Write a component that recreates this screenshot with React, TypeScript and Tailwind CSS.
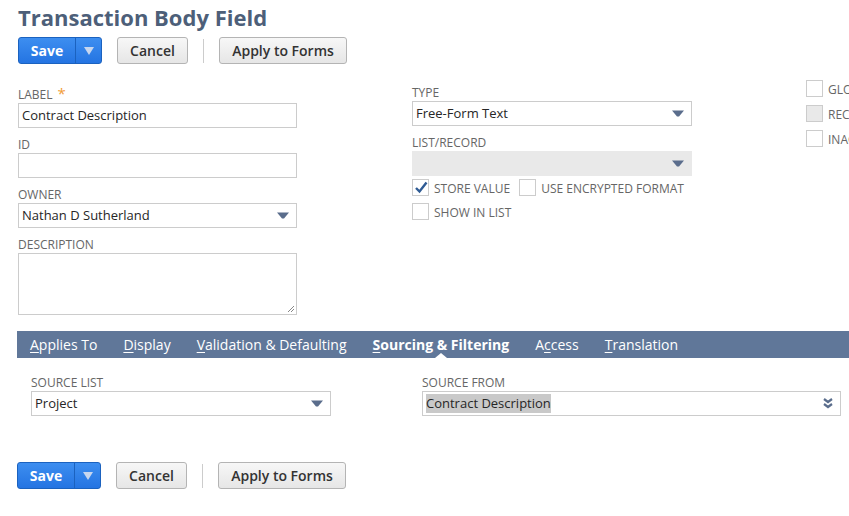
import React from "react";

const font = "font-['Open_Sans',sans-serif]";

function SelectArrow() {
  return (
    <svg width="12" height="7" viewBox="0 0 12 7" className="shrink-0">
      <path d="M0 0.5 L12 0.5 L7 6.5 L5 6.5 Z" fill="#5a6d8c" />
    </svg>
  );
}

function DoubleChevron() {
  return (
    <svg width="10" height="11" viewBox="0 0 10 11" className="shrink-0">
      <path d="M1 1 L5 4 L9 1" stroke="#5a6d8c" strokeWidth="2.2" fill="none" />
      <path d="M1 6 L5 9 L9 6" stroke="#5a6d8c" strokeWidth="2.2" fill="none" />
    </svg>
  );
}

function Check() {
  return (
    <svg width="14" height="13" viewBox="0 0 14 13">
      <path d="M2 7 L5.5 10.5 L12.5 1.5" stroke="#2f5b94" strokeWidth="2.4" fill="none" />
    </svg>
  );
}

function Label({ children, req }: { children: React.ReactNode; req?: boolean }) {
  return (
    <div className="text-[12px] leading-[16px] mt-[2px] text-[#666] uppercase whitespace-nowrap">
      {children}
      {req && <span className="text-[#f29d38] ml-[5px] text-[15px] leading-[10px]">*</span>}
    </div>
  );
}

function TextInput({ value, w }: { value?: string; w: string }) {
  return (
    <div className={`${w} h-[25px] border border-[#ccc] bg-white flex items-center px-[3px] text-[13px] text-[#262626]`}>
      {value}
    </div>
  );
}

function Select({ value, w, disabled, highlight, double }: { value?: string; w: string; disabled?: boolean; highlight?: boolean; double?: boolean }) {
  return (
    <div
      className={`${w} h-[25px] border flex items-center justify-between pl-[3px] pr-[7px] text-[13px] text-[#262626] ${
        disabled ? "bg-[#e9e9e9] border-[#e9e9e9]" : "bg-white border-[#ccc]"
      }`}
    >
      <span className={highlight ? "bg-[#c9c9c9]" : ""}>{value}</span>
      {double ? <DoubleChevron /> : <SelectArrow />}
    </div>
  );
}

function Checkbox({ label, checked, gray }: { label: string; checked?: boolean; gray?: boolean }) {
  return (
    <div className="flex items-end gap-[5px] h-[17px] whitespace-nowrap">
      <div
        className={`w-[17px] h-[17px] border border-[#ccc] flex items-center justify-center shrink-0 ${
          gray ? "bg-[#e9e9e9]" : "bg-white"
        }`}
      >
        {checked && <Check />}
      </div>
      <span className="text-[12px] leading-[14px] text-[#666] uppercase">{label}</span>
    </div>
  );
}

function ButtonBar() {
  return (
    <div className="flex items-center h-[27px]">
      <div className="flex h-[27px] rounded-[3px] border border-[#1b62bf] bg-gradient-to-b from-[#3d8ef0] to-[#2474e2] overflow-hidden">
        <div className="w-[56px] flex items-center justify-center text-white text-[14px] font-bold">Save</div>
        <div className="w-[26px] border-l border-[#1b62bf] flex items-center justify-center">
          <svg width="10" height="8" viewBox="0 0 10 8">
            <path d="M0 0 L10 0 L5 8 Z" fill="#c7d6ee" />
          </svg>
        </div>
      </div>
      <div className="ml-[15px] w-[71px] h-[27px] rounded-[3px] border border-[#b4b4b4] bg-gradient-to-b from-[#f7f7f7] to-[#e6e6e6] flex items-center justify-center text-[14px] font-semibold text-[#333]">
        Cancel
      </div>
      <div className="ml-[15px] w-px h-[24px] bg-[#ccc]" />
      <div className="ml-[15px] w-[128px] h-[27px] rounded-[3px] border border-[#b4b4b4] bg-gradient-to-b from-[#f7f7f7] to-[#e6e6e6] flex items-center justify-center text-[14px] font-semibold text-[#333]">
        Apply to Forms
      </div>
    </div>
  );
}

const tabs = [
  { pre: "", u: "A", post: "pplies To" },
  { pre: "", u: "D", post: "isplay" },
  { pre: "", u: "V", post: "alidation & Defaulting" },
  { pre: "", u: "S", post: "ourcing & Filtering", active: true },
  { pre: "A", u: "c", post: "cess" },
  { pre: "", u: "T", post: "ranslation" },
];

export default function App() {
  return (
    <div className={`w-[849px] h-[516px] overflow-hidden bg-white ${font}`}>
      <div className="w-[1000px]">
        {/* Header */}
        <div className="pl-[18px] pt-[2px]">
          <h1 className="text-[22px] leading-[30px] font-bold text-[#4d5f79]">Transaction Body Field</h1>
          <div className="mt-[5px]">
            <ButtonBar />
          </div>
        </div>

        {/* Main fields */}
        <div className="flex pl-[18px] mt-[21px]">
          <div className="w-[279px] flex flex-col gap-[7px]">
            <div>
              <Label req>Label</Label>
              <TextInput w="w-[279px]" value="Contract Description" />
            </div>
            <div>
              <Label>ID</Label>
              <TextInput w="w-[279px]" />
            </div>
            <div>
              <Label>Owner</Label>
              <Select w="w-[279px]" value="Nathan D Sutherland" />
            </div>
            <div>
              <Label>Description</Label>
              <div className="relative w-[279px] h-[62px] border border-[#ccc] bg-white">
                <svg width="8" height="8" viewBox="0 0 8 8" className="absolute right-[1px] bottom-[1px]">
                  <path d="M7 1 L1 7 M7 4 L4 7" stroke="#888" strokeWidth="1" />
                </svg>
              </div>
            </div>
          </div>

          <div className="ml-[115px] w-[280px] -mt-[2px] flex flex-col">
            <div>
              <Label>Type</Label>
              <Select w="w-[280px]" value="Free-Form Text" />
            </div>
            <div className="mt-[7px]">
              <Label>List/Record</Label>
              <Select w="w-[280px]" disabled />
            </div>
            <div className="mt-[3px] flex">
              <Checkbox label="Store Value" checked />
              <div className="ml-[9px]">
                <Checkbox label="Use Encrypted Format" />
              </div>
            </div>
            <div className="mt-[7px]">
              <Checkbox label="Show in List" />
            </div>
          </div>

          <div className="ml-[114px] -mt-[5px] flex flex-col gap-[8px]">
            <Checkbox label="Global Search" />
            <Checkbox label="Record is Parent" gray />
            <Checkbox label="Inactive" />
          </div>
        </div>

        {/* Tabs */}
        <div className="ml-[17px] mt-[16px] h-[27px] bg-[#607799] flex items-center pl-[13px] gap-[26px]">
          {tabs.map((t) => (
            <div key={t.u + t.post} className="relative h-[27px] flex items-center">
              <span className={`text-[14px] text-white whitespace-nowrap ${t.active ? "font-bold" : ""}`}>
                {t.pre}
                <span className="underline underline-offset-2">{t.u}</span>
                {t.post}
              </span>
              {t.active && (
                <div className="absolute bottom-0 left-1/2 -translate-x-1/2 w-0 h-0 border-l-[6px] border-r-[6px] border-b-[5px] border-l-transparent border-r-transparent border-b-white" />
              )}
            </div>
          ))}
        </div>

        {/* Sourcing */}
        <div className="flex pl-[31px] mt-[15px]">
          <div className="w-[300px]">
            <Label>Source List</Label>
            <Select w="w-[300px]" value="Project" />
          </div>
          <div className="ml-[91px] w-[419px]">
            <Label>Source From</Label>
            <Select w="w-[419px]" value="Contract Description" highlight double />
          </div>
        </div>

        {/* Footer buttons */}
        <div className="pl-[17px] mt-[46px]">
          <ButtonBar />
        </div>
      </div>
    </div>
  );
}
